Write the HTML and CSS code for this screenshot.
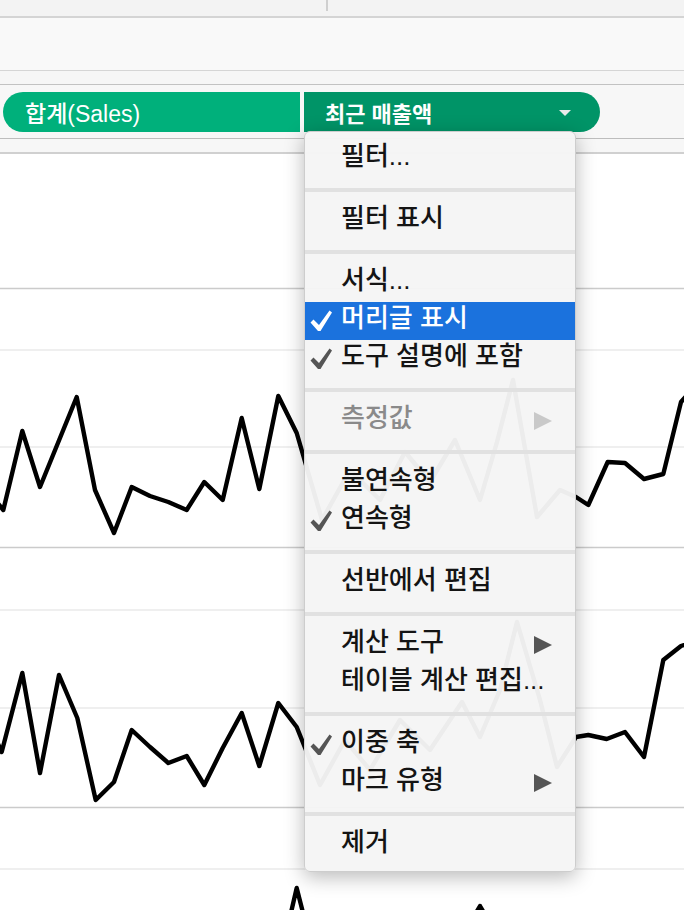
FILE: index.html
```html
<!DOCTYPE html>
<html lang="ko">
<head>
<meta charset="utf-8">
<link rel="stylesheet" href="styles.css">
</head>
<body>
<div class="top">
  <div class="top-left"></div>
  <div class="tick"></div>
</div>
<div class="band1"></div>
<div class="band2"></div>
<div class="shelf">
  <div class="pill pill-a">합계(Sales)</div>
  <div class="pill pill-b"><span>최근 매출액</span><span class="caret"></span></div>
</div>
<div class="band3"></div>
<div class="chart">
  <svg width="684" height="756" viewBox="0 154 684 756">
    <g class="grid-dark">
      <line x1="0" y1="288.5" x2="684" y2="288.5"/>
      <line x1="0" y1="547.5" x2="684" y2="547.5"/>
      <line x1="0" y1="807.5" x2="684" y2="807.5"/>
    </g>
    <g class="grid-light">
      <line x1="0" y1="350" x2="684" y2="350"/>
      <line x1="0" y1="447" x2="684" y2="447"/>
      <line x1="0" y1="610" x2="684" y2="610"/>
      <line x1="0" y1="708" x2="684" y2="708"/>
      <line x1="0" y1="869" x2="684" y2="869"/>
    </g>
    <g class="series">
      <polyline points="-15,488 3.3,510 22.3,431 40,487 76.7,397 95,490 114,533 131.7,487 150,496 168.3,502 186.7,510 204.3,482 222.7,500 241.7,418 259.3,489 278.3,396 296.7,433 322,520 350,470 380,500 405,452 430,482 455,440 480,500 497,442 513,380 537,517 560,490 576,497 588.3,505 607.7,462 625,463 644,479 663.3,474 681,402 700,380"/>
      <polyline points="-12,722 1.7,752 22.3,673 40,773 59,675 77.3,718 95.7,800 114,782 131.7,730 150,747 168.3,763 186.7,756 204.3,785 222.7,748 241.7,713 259.3,766 278.3,703 296.7,727 320,785 345,740 370,770 400,720 430,750 462,702 480,737 500,690 517,622 540,700 557,767 576,737 588.3,735 606.7,739 625,732 644,757 663.3,660 681,646 700,640"/>
      <polyline points="280,960 296.7,888 315,960 400,960 465,932 480,906 495,932 520,960"/>
    </g>
  </svg>
</div>

<div class="menu">
  <div class="item"><span class="label">필터...</span></div>
  <div class="sep"></div>
  <div class="item"><span class="label">필터 표시</span></div>
  <div class="sep"></div>
  <div class="item"><span class="label">서식...</span></div>
  <div class="item hl"><svg class="check" viewBox="0 0 22 22"><path d="M0.5 12.5 L3.5 9.5 L9 15 L19.5 0.5 L22 2.5 L10.5 21 L8 21 Z"/></svg><span class="label">머리글 표시</span></div>
  <div class="item"><svg class="check" viewBox="0 0 22 22"><path d="M0.5 12.5 L3.5 9.5 L9 15 L19.5 0.5 L22 2.5 L10.5 21 L8 21 Z"/></svg><span class="label">도구 설명에 포함</span></div>
  <div class="sep"></div>
  <div class="item disabled"><span class="label">측정값</span><span class="arrow"></span></div>
  <div class="sep"></div>
  <div class="item"><span class="label">불연속형</span></div>
  <div class="item"><svg class="check" viewBox="0 0 22 22"><path d="M0.5 12.5 L3.5 9.5 L9 15 L19.5 0.5 L22 2.5 L10.5 21 L8 21 Z"/></svg><span class="label">연속형</span></div>
  <div class="sep"></div>
  <div class="item"><span class="label">선반에서 편집</span></div>
  <div class="sep"></div>
  <div class="item"><span class="label">계산 도구</span><span class="arrow"></span></div>
  <div class="item"><span class="label">테이블 계산 편집...</span></div>
  <div class="sep"></div>
  <div class="item"><svg class="check" viewBox="0 0 22 22"><path d="M0.5 12.5 L3.5 9.5 L9 15 L19.5 0.5 L22 2.5 L10.5 21 L8 21 Z"/></svg><span class="label">이중 축</span></div>
  <div class="item"><span class="label">마크 유형</span><span class="arrow"></span></div>
  <div class="sep"></div>
  <div class="item"><span class="label">제거</span></div>
</div>
</body>
</html>
```
FILE: styles.css
```css
* { box-sizing: border-box; }
html, body {
  margin: 0;
  padding: 0;
  width: 684px;
  height: 910px;
  overflow: hidden;
  background: #ffffff;
  font-family: "Liberation Sans", "Noto Sans CJK KR", sans-serif;
}
.top {
  height: 18px;
  background: #f3f3f3;
  border-bottom: 2px solid #d4d4d4;
  display: flex;
  align-items: flex-start;
}
.top-left { width: 326px; }
.tick { width: 2px; height: 11px; background: #cfcfcf; }
.band1 {
  height: 53px;
  background: #f9f9f9;
  border-bottom: 1px solid #d5d5d5;
}
.band2 {
  height: 14px;
  background: #f6f6f6;
  border-bottom: 1px solid #c2c2c2;
}
.shelf {
  display: flex;
  gap: 4px;
  padding: 7px 0 6px 3px;
  background: #f7f7f7;
  border-bottom: 1px solid #bdbdbd;
}
.pill {
  height: 40px;
  display: flex;
  align-items: center;
  color: #ffffff;
}
.pill-a {
  width: 297px;
  background: #00b07b;
  border-radius: 20px 0 0 20px;
  padding-left: 22px;
  font-size: 23px;
  font-weight: 500;
}
.pill-b {
  width: 296px;
  background: #009467;
  border-radius: 0 20px 20px 0;
  padding-left: 21px;
  font-size: 22px;
  font-weight: bold;
}
.caret {
  margin-left: auto;
  margin-right: 29px;
  width: 0;
  height: 0;
  border-left: 6px solid transparent;
  border-right: 6px solid transparent;
  border-top: 6px solid #eaeaea;
  margin-top: 2px;
}
.band3 {
  height: 15px;
  background: #f7f7f7;
  border-bottom: 2px solid #d0d0d0;
}
.chart svg { display: block; }
.grid-dark line { stroke: #cbcbcb; stroke-width: 1.5; }
.grid-light line { stroke: #efefef; stroke-width: 2; }
.series polyline {
  fill: none;
  stroke: #000000;
  stroke-width: 4.4;
  stroke-linejoin: round;
  stroke-linecap: round;
}

.menu {
  position: absolute;
  left: 304px;
  top: 131px;
  width: 272px;
  padding: 8px 0 7px;
  background: rgba(245, 245, 245, 0.965);
  border: 1px solid #cdcdcd;
  border-radius: 6px;
  box-shadow: 0 5px 20px rgba(0, 0, 0, 0.28);
  font-size: 26px;
  font-weight: 500;
  color: #141414;
}
.item {
  position: relative;
  height: 38px;
  display: flex;
  align-items: center;
  padding-left: 36px;
  padding-bottom: 6px;
  line-height: 28px;
  white-space: nowrap;
}
.item.hl { background: #1b72dd; color: #ffffff; }
.item.disabled { color: #8a8a8a; }
.check {
  position: absolute;
  left: 5px;
  top: 8px;
  width: 22px;
  height: 22px;
  fill: #555555;
}
.hl .check { fill: #ffffff; }
.arrow {
  margin-left: auto;
  margin-right: 23px;
  margin-top: 6px;
  width: 0;
  height: 0;
  border-left: 18px solid #555555;
  border-top: 9.5px solid transparent;
  border-bottom: 9.5px solid transparent;
}
.disabled .arrow { border-left-color: #c9c9c9; }
.sep {
  height: 4px;
  margin: 10px 0;
  background: #e1e1e1;
}
```
